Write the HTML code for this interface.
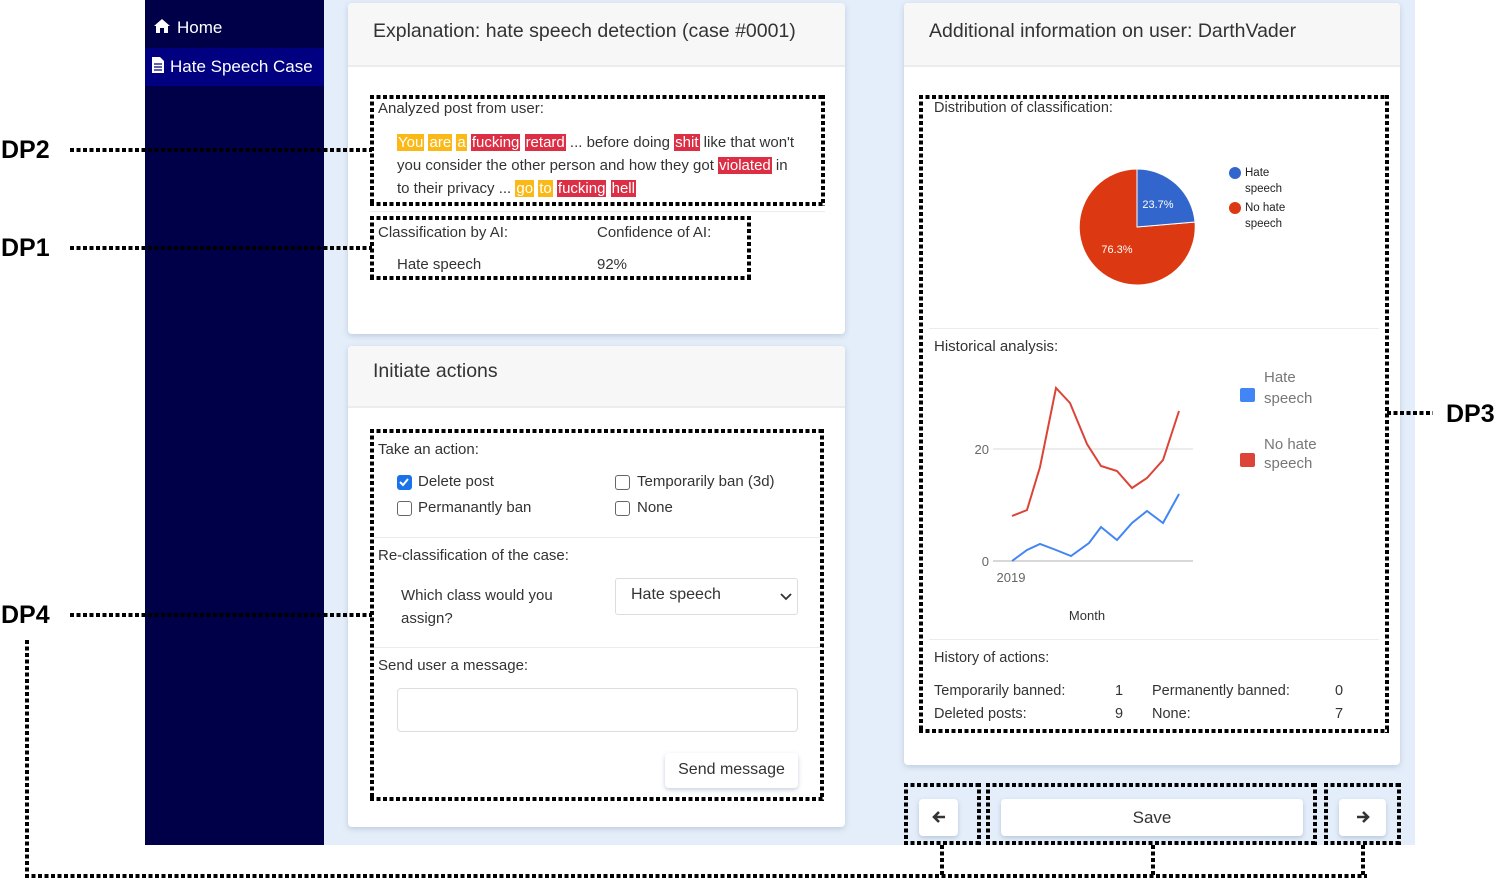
<!DOCTYPE html>
<html><head><meta charset="utf-8">
<style>
*{box-sizing:border-box;margin:0;padding:0}
body{width:1499px;height:879px;background:#fff;position:relative;overflow:hidden;font-family:"Liberation Sans",sans-serif;color:#333}
.a{position:absolute}
.bg{left:324px;top:0;width:1091px;height:845px;background:#e4eefa}
.side{left:145px;top:0;width:179px;height:845px;background:#000048}
.nav{color:#fff;font-size:17px;left:0;width:179px;height:38px;line-height:38px;padding-left:8px}
.card{background:#fff;border-radius:4px;box-shadow:0 2px 6px rgba(120,140,170,.35)}
.hd{position:absolute;left:0;top:0;right:0;background:#f7f7f7;border-bottom:2px solid #ececec;border-radius:4px 4px 0 0;font-size:19.5px;color:#333;padding-left:25px}
.dot{background:
 repeating-linear-gradient(90deg,#000 0 4px,transparent 4px 6.5px) top left/100% 4px no-repeat,
 repeating-linear-gradient(90deg,#000 0 4px,transparent 4px 6.5px) bottom left/100% 4px no-repeat,
 repeating-linear-gradient(180deg,#000 0 4px,transparent 4px 6.5px) top left/4px 100% no-repeat,
 repeating-linear-gradient(180deg,#000 0 4px,transparent 4px 6.5px) top right/4px 100% no-repeat}
.hl{height:4px;background:repeating-linear-gradient(90deg,#000 0 4px,transparent 4px 6.5px)}
.vl{width:4px;background:repeating-linear-gradient(180deg,#000 0 4px,transparent 4px 6.5px)}
.t{font-size:15px;color:#333;white-space:nowrap}
.y{background:#fbb917;color:#fff;padding:0 1px}
.r{background:#dc2e44;color:#fff;padding:0 1px}
.dp{font-family:"Liberation Sans",sans-serif;font-weight:bold;font-size:25px;color:#000}
.cb{width:15px;height:15px;border:1.5px solid #666;border-radius:3px;background:#fff}
.sep{height:2px;background:#ececec}
.btn{background:#fff;border-radius:4px;box-shadow:0 2px 5px rgba(120,140,170,.4);text-align:center}
</style></head><body>
<div class="a bg"></div>
<div class="a side">
  <div class="a nav" style="top:9px"><svg width="18" height="16" viewBox="0 0 18 16" style="vertical-align:-1px;margin-right:6px"><path d="M9 1 L1 8 L3 8 L3 15 L7 15 L7 10 L11 10 L11 15 L15 15 L15 8 L17 8 Z" fill="#fff"/></svg>Home</div>
  <div class="a nav" style="top:48px;background:#000080;padding-left:6px"><svg width="14" height="18" viewBox="0 0 14 18" style="vertical-align:-2px;margin-right:5px"><path d="M1 1 H9 L13 5 V17 H1 Z" fill="#fff"/><path d="M3 8h8M3 11h8M3 14h8" stroke="#000080" stroke-width="1.2"/></svg>Hate Speech Case</div>
</div>

<!-- card 1 -->
<div class="a card" style="left:348px;top:3px;width:497px;height:331px">
  <div class="hd" style="height:64px;line-height:56px">Explanation: hate speech detection (case #0001)</div>
</div>
<div class="a dot" style="left:370px;top:95px;width:455px;height:111px"></div>
<div class="a t" style="left:378px;top:100px">Analyzed post from user:</div>
<div class="a t" style="left:397px;top:131px;line-height:23px;font-size:15px">
<span class="y">You</span> <span class="y">are</span> <span class="y">a</span> <span class="r">fucking</span> <span class="r">retard</span> ... before doing <span class="r">shit</span> like that won't<br>you consider the other person and how they got <span class="r">violated</span> in<br>to their privacy ... <span class="y">go</span> <span class="y">to</span> <span class="r">fucking</span> <span class="r">hell</span></div>
<div class="a sep" style="left:370px;top:211px;width:455px;height:1px"></div>
<div class="a dot" style="left:370px;top:216px;width:381px;height:64px"></div>
<div class="a t" style="left:378px;top:224px">Classification by AI:</div>
<div class="a t" style="left:597px;top:224px">Confidence of AI:</div>
<div class="a t" style="left:397px;top:256px">Hate speech</div>
<div class="a t" style="left:597px;top:256px">92%</div>

<!-- card 2 -->
<div class="a card" style="left:348px;top:346px;width:497px;height:481px">
  <div class="hd" style="height:62px;line-height:50px">Initiate actions</div>
</div>
<div class="a dot" style="left:370px;top:429px;width:454px;height:372px"></div>
<div class="a t" style="left:378px;top:441px">Take an action:</div>
<div class="a cb" style="left:397px;top:475px;background:#1a73e8;border-color:#1a73e8"><svg width="12" height="12" viewBox="0 0 12 12" style="position:absolute;left:0;top:0"><path d="M2 6 L5 9 L10 3" stroke="#fff" stroke-width="2" fill="none"/></svg></div>
<div class="a t" style="left:418px;top:473px">Delete post</div>
<div class="a cb" style="left:615px;top:475px"></div>
<div class="a t" style="left:637px;top:473px">Temporarily ban (3d)</div>
<div class="a cb" style="left:397px;top:501px"></div>
<div class="a t" style="left:418px;top:499px">Permanantly ban</div>
<div class="a cb" style="left:615px;top:501px"></div>
<div class="a t" style="left:637px;top:499px">None</div>
<div class="a sep" style="left:374px;top:537px;width:448px;height:1px"></div>
<div class="a t" style="left:378px;top:547px">Re-classification of the case:</div>
<div class="a t" style="left:401px;top:584px;line-height:23px">Which class would you<br>assign?</div>
<div class="a" style="left:615px;top:578px;width:183px;height:37px;border:1px solid #ddd;border-radius:3px;background:#fff"></div>
<div class="a t" style="left:631px;top:586px;font-size:16px">Hate speech</div>
<svg class="a" style="left:780px;top:592px" width="12" height="10" viewBox="0 0 12 10"><path d="M1 2 L6 7 L11 2" stroke="#333" stroke-width="1.8" fill="none"/></svg>
<div class="a sep" style="left:374px;top:647px;width:448px;height:1px"></div>
<div class="a t" style="left:378px;top:657px">Send user a message:</div>
<div class="a" style="left:397px;top:688px;width:401px;height:44px;border:1px solid #ddd;border-radius:4px;background:#fff"></div>
<div class="a btn t" style="left:665px;top:753px;width:133px;height:35px;line-height:34px;font-size:16px">Send message</div>

<!-- right card -->
<div class="a card" style="left:904px;top:3px;width:496px;height:762px">
  <div class="hd" style="height:64px;line-height:56px">Additional information on user: DarthVader</div>
</div>
<div class="a dot" style="left:919px;top:95px;width:470px;height:638px"></div>
<div class="a t" style="left:934px;top:100px;font-size:14.5px">Distribution of classification:</div>
<svg class="a" style="left:1070px;top:160px" width="140" height="135" viewBox="1070 160 140 135">
  <path d="M1137 227 L1137 169 A58 58 0 1 0 1195 222 Z" fill="#dc3912" stroke="#fff" stroke-width="1"/>
  <path d="M1137 227 L1137 169 A58 58 0 0 1 1195 222 Z" fill="#3366cc" stroke="#fff" stroke-width="1"/>
  <text x="1158" y="208" fill="#fff" font-size="11" font-family="Liberation Sans" text-anchor="middle">23.7%</text>
  <text x="1117" y="253" fill="#fff" font-size="11" font-family="Liberation Sans" text-anchor="middle">76.3%</text>
</svg>
<div class="a" style="left:1229px;top:167px;width:12px;height:12px;border-radius:50%;background:#3366cc"></div>
<div class="a" style="left:1229px;top:202px;width:12px;height:12px;border-radius:50%;background:#dc3912"></div>
<div class="a" style="left:1245px;top:165px;font-size:11.5px;line-height:16px;color:#222">Hate<br>speech</div>
<div class="a" style="left:1245px;top:200px;font-size:11.5px;line-height:16px;color:#222">No hate<br>speech</div>
<div class="a sep" style="left:929px;top:328px;width:450px;height:1px"></div>
<div class="a t" style="left:934px;top:338px;font-size:15px">Historical analysis:</div>
<svg class="a" style="left:960px;top:360px" width="240" height="270" viewBox="960 360 240 270" font-family="Liberation Sans">
  <line x1="993" y1="449" x2="1193" y2="449" stroke="#e6e6e6" stroke-width="1.5"/>
  <line x1="993" y1="561" x2="1193" y2="561" stroke="#ccc" stroke-width="1.5"/>
  <text x="989" y="454" fill="#666" font-size="13" text-anchor="end">20</text>
  <text x="989" y="566" fill="#666" font-size="13" text-anchor="end">0</text>
  <text x="1011" y="582" fill="#666" font-size="13" text-anchor="middle">2019</text>
  <text x="1087" y="620" fill="#333" font-size="13" text-anchor="middle">Month</text>
  <polyline fill="none" stroke="#db4437" stroke-width="2" points="1012,516 1027,510 1040,467 1056,388 1070,403 1087,444 1101,466 1117,471 1132,488 1147,478 1163,460 1179,411"/>
  <polyline fill="none" stroke="#4285f4" stroke-width="2" points="1012,561 1027,550 1040,544 1056,550 1071,556 1089,543 1101,527 1117,540 1132,523 1147,511 1163,523 1179,494"/>
</svg>
<div class="a" style="left:1240px;top:388px;width:15px;height:14px;background:#4285f4;border-radius:2px"></div>
<div class="a" style="left:1240px;top:453px;width:15px;height:14px;background:#db4437;border-radius:2px"></div>
<div class="a" style="left:1264px;top:367px;font-size:15px;line-height:21px;color:#777">Hate<br>speech</div>
<div class="a" style="left:1264px;top:435px;font-size:15px;line-height:19px;color:#777">No hate<br>speech</div>
<div class="a sep" style="left:929px;top:639px;width:450px;height:1px"></div>
<div class="a t" style="left:934px;top:650px;font-size:14.5px">History of actions:</div>
<div class="a t" style="left:934px;top:683px;font-size:14.5px">Temporarily banned:</div>
<div class="a t" style="left:1115px;top:683px;font-size:14.5px">1</div>
<div class="a t" style="left:1152px;top:683px;font-size:14.5px">Permanently banned:</div>
<div class="a t" style="left:1335px;top:683px;font-size:14.5px">0</div>
<div class="a t" style="left:934px;top:706px;font-size:14.5px">Deleted posts:</div>
<div class="a t" style="left:1115px;top:706px;font-size:14.5px">9</div>
<div class="a t" style="left:1152px;top:706px;font-size:14.5px">None:</div>
<div class="a t" style="left:1335px;top:706px;font-size:14.5px">7</div>

<!-- bottom buttons -->
<div class="a btn" style="left:919px;top:799px;width:39px;height:37px"><svg width="16" height="16" viewBox="0 0 16 16" style="margin-top:10px"><path d="M14 8 H3 M8 3 L3 8 L8 13" stroke="#333" stroke-width="2.6" fill="none"/></svg></div>
<div class="a btn" style="left:1001px;top:799px;width:302px;height:37px;line-height:37px;font-size:17px;color:#333">Save</div>
<div class="a btn" style="left:1339px;top:799px;width:47px;height:37px"><svg width="16" height="16" viewBox="0 0 16 16" style="margin-top:10px"><path d="M2 8 H13 M8 3 L13 8 L8 13" stroke="#333" stroke-width="2.6" fill="none"/></svg></div>
<div class="a dot" style="left:904px;top:783px;width:77px;height:62px"></div>
<div class="a dot" style="left:986px;top:783px;width:331px;height:62px"></div>
<div class="a dot" style="left:1324px;top:783px;width:77px;height:62px"></div>

<!-- DP labels & connectors -->
<div class="a dp" style="left:1px;top:136px">DP2</div>
<div class="a dp" style="left:1px;top:234px">DP1</div>
<div class="a dp" style="left:1px;top:601px">DP4</div>
<div class="a dp" style="left:1446px;top:400px">DP3</div>
<div class="a hl" style="left:70px;top:148px;width:302px"></div>
<div class="a hl" style="left:70px;top:246px;width:302px"></div>
<div class="a hl" style="left:70px;top:613px;width:302px"></div>
<div class="a hl" style="left:1387px;top:411px;width:46px"></div>
<div class="a vl" style="left:25px;top:640px;height:238px"></div>
<div class="a hl" style="left:25px;top:874px;width:1342px"></div>
<div class="a vl" style="left:940px;top:845px;height:32px"></div>
<div class="a vl" style="left:1151px;top:845px;height:32px"></div>
<div class="a vl" style="left:1361px;top:845px;height:32px"></div>
</body></html>
